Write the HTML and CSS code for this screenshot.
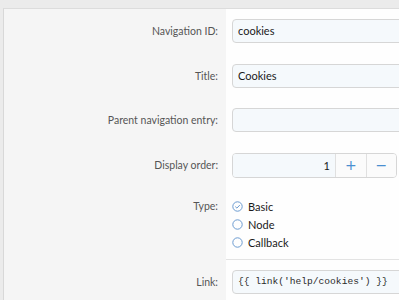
FILE: index.html
```html
<!DOCTYPE html>
<html>
<head>
<meta charset="utf-8">
<link rel="stylesheet" href="styles.css">
</head>
<body>
<div class="head"><h1 class="title">Edit navigation: Cookies</h1></div>
<div class="block">
  <div class="row">
    <div class="label">Navigation ID:</div>
    <div class="ctrl"><div class="input">cookies</div></div>
  </div>
  <div class="row">
    <div class="label">Title:</div>
    <div class="ctrl"><div class="input">Cookies</div></div>
  </div>
  <div class="row">
    <div class="label">Parent navigation entry:</div>
    <div class="ctrl"><div class="input"></div></div>
  </div>
  <div class="row">
    <div class="label">Display order:</div>
    <div class="ctrl">
      <div class="spinner">
        <div class="num">1</div>
        <div class="btn">+</div>
        <div class="btn">&minus;</div>
      </div>
    </div>
  </div>
  <div class="row row-type">
    <div class="label">Type:</div>
    <div class="ctrl">
      <div class="radio">
        <svg width="11" height="11" viewBox="0 0 11 11"><circle cx="5.5" cy="5.5" r="4.7" fill="none" stroke="#6b9bd0" stroke-width="1"/><path d="M3.3 5.6 L4.9 7.1 L7.8 4.1" fill="none" stroke="#6b9bd0" stroke-width="1"/></svg>
        <span>Basic</span>
      </div>
      <div class="radio">
        <svg width="11" height="11" viewBox="0 0 11 11"><circle cx="5.5" cy="5.5" r="4.7" fill="none" stroke="#6b9bd0" stroke-width="1"/></svg>
        <span>Node</span>
      </div>
      <div class="radio">
        <svg width="11" height="11" viewBox="0 0 11 11"><circle cx="5.5" cy="5.5" r="4.7" fill="none" stroke="#6b9bd0" stroke-width="1"/></svg>
        <span>Callback</span>
      </div>
    </div>
  </div>
  <div class="row row-sep">
    <div class="label">Link:</div>
    <div class="ctrl"><div class="input mono">{{ link('help/cookies') }}</div></div>
  </div>
</div>
</body>
</html>
```

FILE: styles.css
```css
html, body {
  margin: 0;
  padding: 0;
  background: #ebebeb;
  overflow: hidden;
  width: 399px;
  height: 300px;
  font-family: "Lato", "Liberation Sans", sans-serif;
  font-size: 11px;
}

.head {
  height: 8px;
  overflow: hidden;
}

.title {
  margin: -20px 0 0 2px;
  font-size: 18px;
  line-height: 20px;
  font-weight: 400;
  color: #3a3a3a;
  white-space: nowrap;
}

.block {
  margin-left: 3px;
  border-left: 1px solid #d8d8d8;
  border-top: 1px solid #dcdcdc;
  background: #fefefe;
  width: 500px;
  height: 400px;
}

.row {
  display: grid;
  grid-template-columns: 222px 1fr;
}

.label {
  background: #f5f5f5;
  text-align: right;
  padding: 10px 8px 10.5px 0;
  line-height: 24px;
  font-size: 10.5px;
  color: #555555;
  white-space: nowrap;
}

.ctrl {
  padding: 10px 0 10.5px 6px;
}

.input {
  box-sizing: border-box;
  height: 24px;
  width: 230px;
  border: 1px solid #d6d6d6;
  border-radius: 4px;
  background: #f5f9fc;
  line-height: 22px;
  padding-left: 5px;
  color: #1a1a1a;
  font-size: 11px;
}

.mono {
  font-family: "Liberation Mono", "DejaVu Sans Mono", monospace;
  font-size: 9.6px;
  color: #2a2a2a;
}

.spinner {
  box-sizing: border-box;
  display: flex;
  width: 165px;
  height: 25px;
  border: 1px solid #d6d6d6;
  border-radius: 4px;
  overflow: hidden;
}

.num {
  flex: 0 0 102px;
  background: #f5f9fc;
  text-align: right;
  padding-right: 5px;
  box-sizing: border-box;
  line-height: 23px;
  color: #1a1a1a;
}

.btn {
  flex: 1;
  border-left: 1px solid #e0e0e0;
  background: #fbfbfb;
  color: #4a8fd0;
  text-align: center;
  line-height: 23px;
  font-size: 14px;
  font-family: "DejaVu Sans", sans-serif;
}

.row-type .label {
  padding: 9px 8px 8px 0;
  line-height: 18px;
}

.row-type .ctrl {
  padding: 9px 0 8px 6px;
}

.radio {
  display: flex;
  align-items: center;
  gap: 5px;
  height: 18px;
  color: #1a1a1a;
}

.radio svg {
  display: block;
}

.row-sep .label {
  padding-top: 11px;
}

.row-sep .ctrl {
  border-top: 1px solid #e3e3e3;
}
```
